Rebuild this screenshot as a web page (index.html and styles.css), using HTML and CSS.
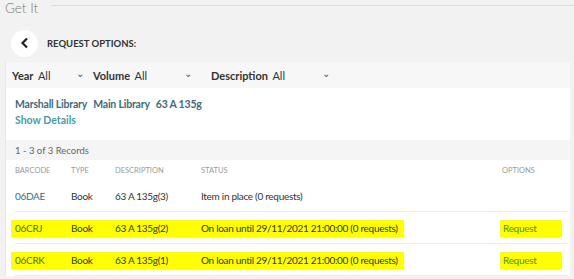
FILE: index.html
```html
<!DOCTYPE html>
<html lang="en">

<head>
    <meta charset="utf-8">
    <meta name="viewport" content="width=device-width, initial-scale=1.0">
    <title>Get It</title>
    <link rel="stylesheet" href="styles.css">
</head>

<body>
    <header class="topbar">
        <h1>Get It</h1>
        <span class="rule"></span>
    </header>

    <div class="options-head">
        <button class="back" aria-label="Back">
            <svg width="10" height="12" viewBox="0 0 10 12">
                <path d="M7 1.5 L2.5 6 L7 10.5" fill="none" stroke="#222" stroke-width="2.2" />
            </svg>
        </button>
        <h2>REQUEST OPTIONS:</h2>
    </div>

    <section class="panel">
        <div class="filters">
            <div class="filter filter-year"><b>Year</b> All <span class="caret">&#8964;</span></div>
            <div class="filter filter-volume"><b>Volume</b> All <span class="caret">&#8964;</span></div>
            <div class="filter filter-desc"><b>Description</b> All <span class="caret">&#8964;</span></div>
        </div>

        <div class="location">
            <p class="loc-line"><span>Marshall Library</span><span>Main Library</span><span>63 A 135g</span></p>
            <a href="#" class="details">Show Details</a>
        </div>

        <div class="records">1 - 3 of 3 Records</div>

        <div class="items">
            <div class="row head">
                <span>Barcode</span>
                <span>Type</span>
                <span>Description</span>
                <span>Status</span>
                <span>Options</span>
            </div>
            <div class="row">
                <span class="barcode">06DAE</span>
                <span>Book</span>
                <span>63 A 135g(3)</span>
                <span>Item in place (0 requests)</span>
                <span></span>
            </div>
            <div class="row marked">
                <span class="barcode">06CRJ</span>
                <span>Book</span>
                <span>63 A 135g(2)</span>
                <span>On loan until 29/11/2021 21:00:00 (0 requests)</span>
                <a href="#" class="request">Request</a>
            </div>
            <div class="row marked">
                <span class="barcode">06CRK</span>
                <span>Book</span>
                <span>63 A 135g(1)</span>
                <span>On loan until 29/11/2021 21:00:00 (0 requests)</span>
                <a href="#" class="request">Request</a>
            </div>
        </div>
    </section>
</body>

</html>
```

FILE: styles.css
```css
* {
    box-sizing: border-box;
}

body {
    margin: 0;
    background-color: #f2f2f2;
    font-family: Lato, "Open Sans", sans-serif;
    color: #333;
    font-size: 11px;
    overflow: hidden;
}

.topbar {
    display: flex;
    height: 16px;
}

h1 {
    margin: 0;
    font-size: 13.5px;
    font-weight: 300;
    color: #7a7a7a;
    line-height: 16px;
    padding-left: 5px;
}

.rule {
    flex: 1;
    margin-left: 13px;
    margin-top: 5px;
    height: 0;
    border-top: 1px solid #dcdcdc;
}

.options-head {
    display: flex;
    align-items: center;
    padding-left: 11px;
    margin-top: 13px;
    height: 28px;
}

.back {
    width: 27px;
    height: 27px;
    border-radius: 50%;
    border: none;
    background-color: white;
    display: flex;
    align-items: center;
    justify-content: center;
    padding: 0;
}

h2 {
    margin: 0 0 0 9px;
    font-size: 9.5px;
    font-weight: 700;
    color: #333;
}

.panel {
    margin: 5px 4px 0 5px;
    background-color: white;
    border-left: 1px solid #e8e8e8;
}

.filters {
    display: flex;
    align-items: center;
    height: 26px;
    background-color: #f7f7f7;
}

.filter {
    font-size: 11px;
    color: #333;
    white-space: nowrap;
}

.filter b {
    font-weight: 700;
    margin-right: 2px;
}

.caret {
    color: #555;
    font-size: 10px;
    display: inline-block;
    transform: translateY(-3px);
}

.filter-year {
    padding-left: 6px;
    width: 87px;
}

.filter-year .caret {
    margin-left: 23px;
}

.filter-volume {
    width: 118px;
}

.filter-volume .caret {
    margin-left: 34px;
}

.filter-desc .caret {
    margin-left: 34px;
}

.location {
    padding: 10px 9px 13px 9px;
}

.loc-line {
    margin: 0 0 3px 0;
    color: #3d6a82;
    font-weight: 700;
    font-size: 10.5px;
    line-height: 13px;
    letter-spacing: -0.2px;
}

.loc-line span {
    margin-right: 6px;
}

.details {
    display: block;
    color: #4a9aa8;
    text-decoration: none;
    font-weight: 700;
    font-size: 10.5px;
    line-height: 13px;
}

.records {
    background-color: #f5f5f5;
    height: 20px;
    line-height: 21px;
    padding-left: 9px;
    color: #666;
    font-size: 9.5px;
}

.row {
    display: grid;
    grid-template-columns: 56px 44px 86px 301px 1fr;
    align-items: center;
    height: 32px;
    padding-left: 9px;
    font-size: 10px;
    letter-spacing: -0.3px;
    color: #333;
    background-image: linear-gradient(#ebebeb, #ebebeb);
    background-repeat: no-repeat;
    background-size: calc(100% - 11px) 1px;
    background-position: 9px 100%;
}

.row.head {
    height: 20px;
    background-image: none;
    text-transform: uppercase;
    font-size: 7.5px;
    color: #999;
    letter-spacing: 0;
}

.barcode {
    color: #3d6a82;
}

.request {
    color: #4a9aa8;
    text-decoration: none;
    padding-left: 1px;
}

.marked {
    background-image: linear-gradient(#ffff00, #ffff00), linear-gradient(#ffff00, #ffff00), linear-gradient(#ebebeb, #ebebeb);
    background-size: 393px 17px, 62px 17px, calc(100% - 11px) 1px;
    background-position: 5px 8px, 494px 8px, 9px 100%;
}

.marked .barcode {
    color: #4f6f00;
}

.marked .request {
    color: #4e8f1a;
}
```
